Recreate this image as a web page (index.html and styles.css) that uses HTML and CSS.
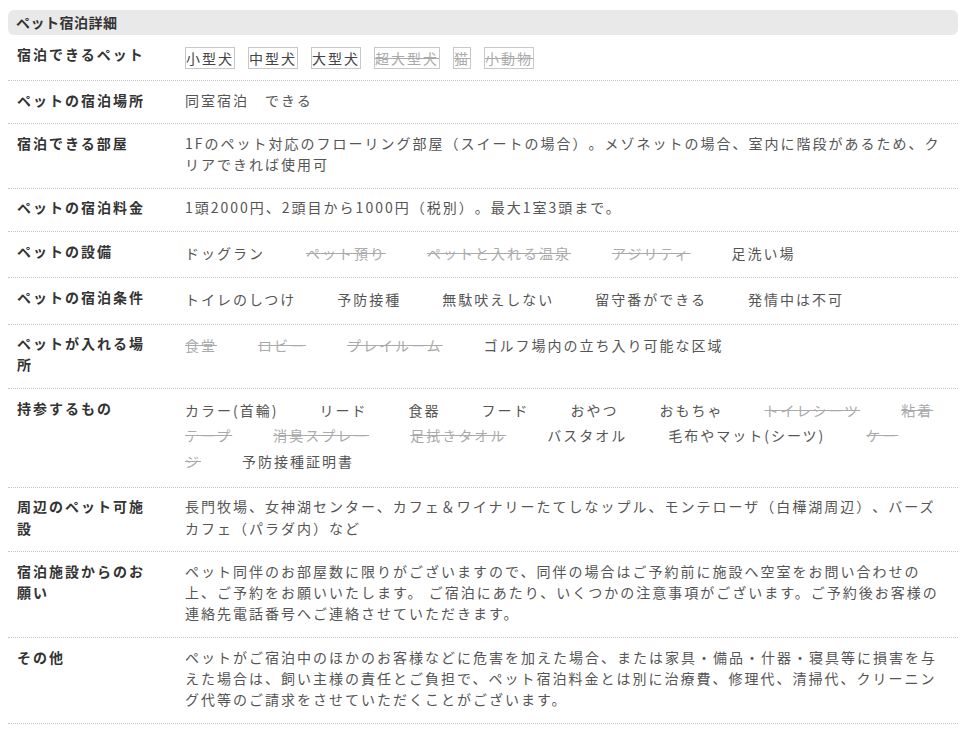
FILE: index.html
```html
<!DOCTYPE html>
<html lang="ja">
<head>
<meta charset="utf-8">
<title>ペット宿泊詳細</title>
<link rel="stylesheet" href="styles.css">
</head>
<body>
<section class="detail">
  <h2 class="detail-title">ペット宿泊詳細</h2>

  <div class="row">
    <div class="label">宿泊できるペット</div>
    <div class="value">
      <div class="tags">
        <span class="tag">小型犬</span>
        <span class="tag">中型犬</span>
        <span class="tag">大型犬</span>
        <span class="tag off">超大型犬</span>
        <span class="tag off">猫</span>
        <span class="tag off">小動物</span>
      </div>
    </div>
  </div>

  <div class="row">
    <div class="label">ペットの宿泊場所</div>
    <div class="value">同室宿泊　できる</div>
  </div>

  <div class="row">
    <div class="label">宿泊できる部屋</div>
    <div class="value">1Fのペット対応のフローリング部屋（スイートの場合）。メゾネットの場合、室内に階段があるため、クリアできれば使用可</div>
  </div>

  <div class="row">
    <div class="label">ペットの宿泊料金</div>
    <div class="value">1頭2000円、2頭目から1000円（税別）。最大1室3頭まで。</div>
  </div>

  <div class="row">
    <div class="label">ペットの設備</div>
    <div class="value list"><span class="item">ドッグラン</span><span class="item off">ペット預り</span><span class="item off">ペットと入れる温泉</span><span class="item off">アジリティ</span><span class="item">足洗い場</span></div>
  </div>

  <div class="row">
    <div class="label">ペットの宿泊条件</div>
    <div class="value list"><span class="item">トイレのしつけ</span><span class="item">予防接種</span><span class="item">無駄吠えしない</span><span class="item">留守番ができる</span><span class="item">発情中は不可</span></div>
  </div>

  <div class="row">
    <div class="label">ペットが入れる場所</div>
    <div class="value list"><span class="item off">食堂</span><span class="item off">ロビー</span><span class="item off">プレイルーム</span><span class="item">ゴルフ場内の立ち入り可能な区域</span></div>
  </div>

  <div class="row">
    <div class="label">持参するもの</div>
    <div class="value list list-tall"><span class="item">カラー(首輪)</span><span class="item">リード</span><span class="item">食器</span><span class="item">フード</span><span class="item">おやつ</span><span class="item">おもちゃ</span><span class="item off">トイレシーツ</span><span class="item off">粘着テープ</span><span class="item off">消臭スプレー</span><span class="item off">足拭きタオル</span><span class="item">バスタオル</span><span class="item">毛布やマット(シーツ)</span><span class="item off">ケージ</span><span class="item">予防接種証明書</span></div>
  </div>

  <div class="row">
    <div class="label">周辺のペット可施設</div>
    <div class="value">長門牧場、女神湖センター、カフェ＆ワイナリーたてしなップル、モンテローザ（白樺湖周辺）、バーズカフェ（パラダ内）など</div>
  </div>

  <div class="row">
    <div class="label">宿泊施設からのお願い</div>
    <div class="value">ペット同伴のお部屋数に限りがございますので、同伴の場合はご予約前に施設へ空室をお問い合わせの上、ご予約をお願いいたします。 ご宿泊にあたり、いくつかの注意事項がございます。ご予約後お客様の連絡先電話番号へご連絡させていただきます。</div>
  </div>

  <div class="row">
    <div class="label">その他</div>
    <div class="value">ペットがご宿泊中のほかのお客様などに危害を加えた場合、または家具・備品・什器・寝具等に損害を与えた場合は、飼い主様の責任とご負担で、ペット宿泊料金とは別に治療費、修理代、清掃代、クリーニング代等のご請求をさせていただくことがございます。</div>
  </div>
</section>
</body>
</html>
```

FILE: styles.css
```css
html, body {
  margin: 0;
  padding: 0;
  background: #ffffff;
}

body {
  font-family: "Noto Sans CJK JP", "Noto Sans", sans-serif;
  font-size: 14px;
  color: #555555;
  text-spacing-trim: space-all;
}

.detail {
  width: 950px;
  margin: 10px 0 0 8px;
}

.detail-title {
  margin: 0;
  height: 25px;
  line-height: 24px;
  padding: 0 0 0 8px;
  background: #e9e9e9;
  border-radius: 6px;
  font-size: 14px;
  font-weight: bold;
  letter-spacing: 0.5px;
  color: #333333;
}

.row {
  display: flex;
  align-items: flex-start;
  gap: 28px;
  padding: 8.5px 10px 12.5px 9px;
  border-bottom: 1px dotted #c4c4c4;
}

.label {
  flex: 0 0 140px;
  width: 140px;
  font-weight: bold;
  color: #333333;
  line-height: 21.25px;
  letter-spacing: 2px;
}

.value {
  flex: 1 1 auto;
  min-width: 0;
  line-height: 21.25px;
  letter-spacing: 2px;
}

.tags {
  display: flex;
  align-items: flex-end;
  gap: 13px;
  height: 25px;
  margin-bottom: -1px;
}

.tag {
  display: block;
  border: 1px solid #c8c8c8;
  line-height: 20px;
  color: #444444;
  letter-spacing: 2px;
}

.tag.off,
.item.off {
  color: #aaaaaa;
  text-decoration: line-through;
}

.list {
  line-height: 24.3px;
}

.list-tall {
  line-height: 25.6px;
}

.item {
  margin-right: 41px;
}
```
